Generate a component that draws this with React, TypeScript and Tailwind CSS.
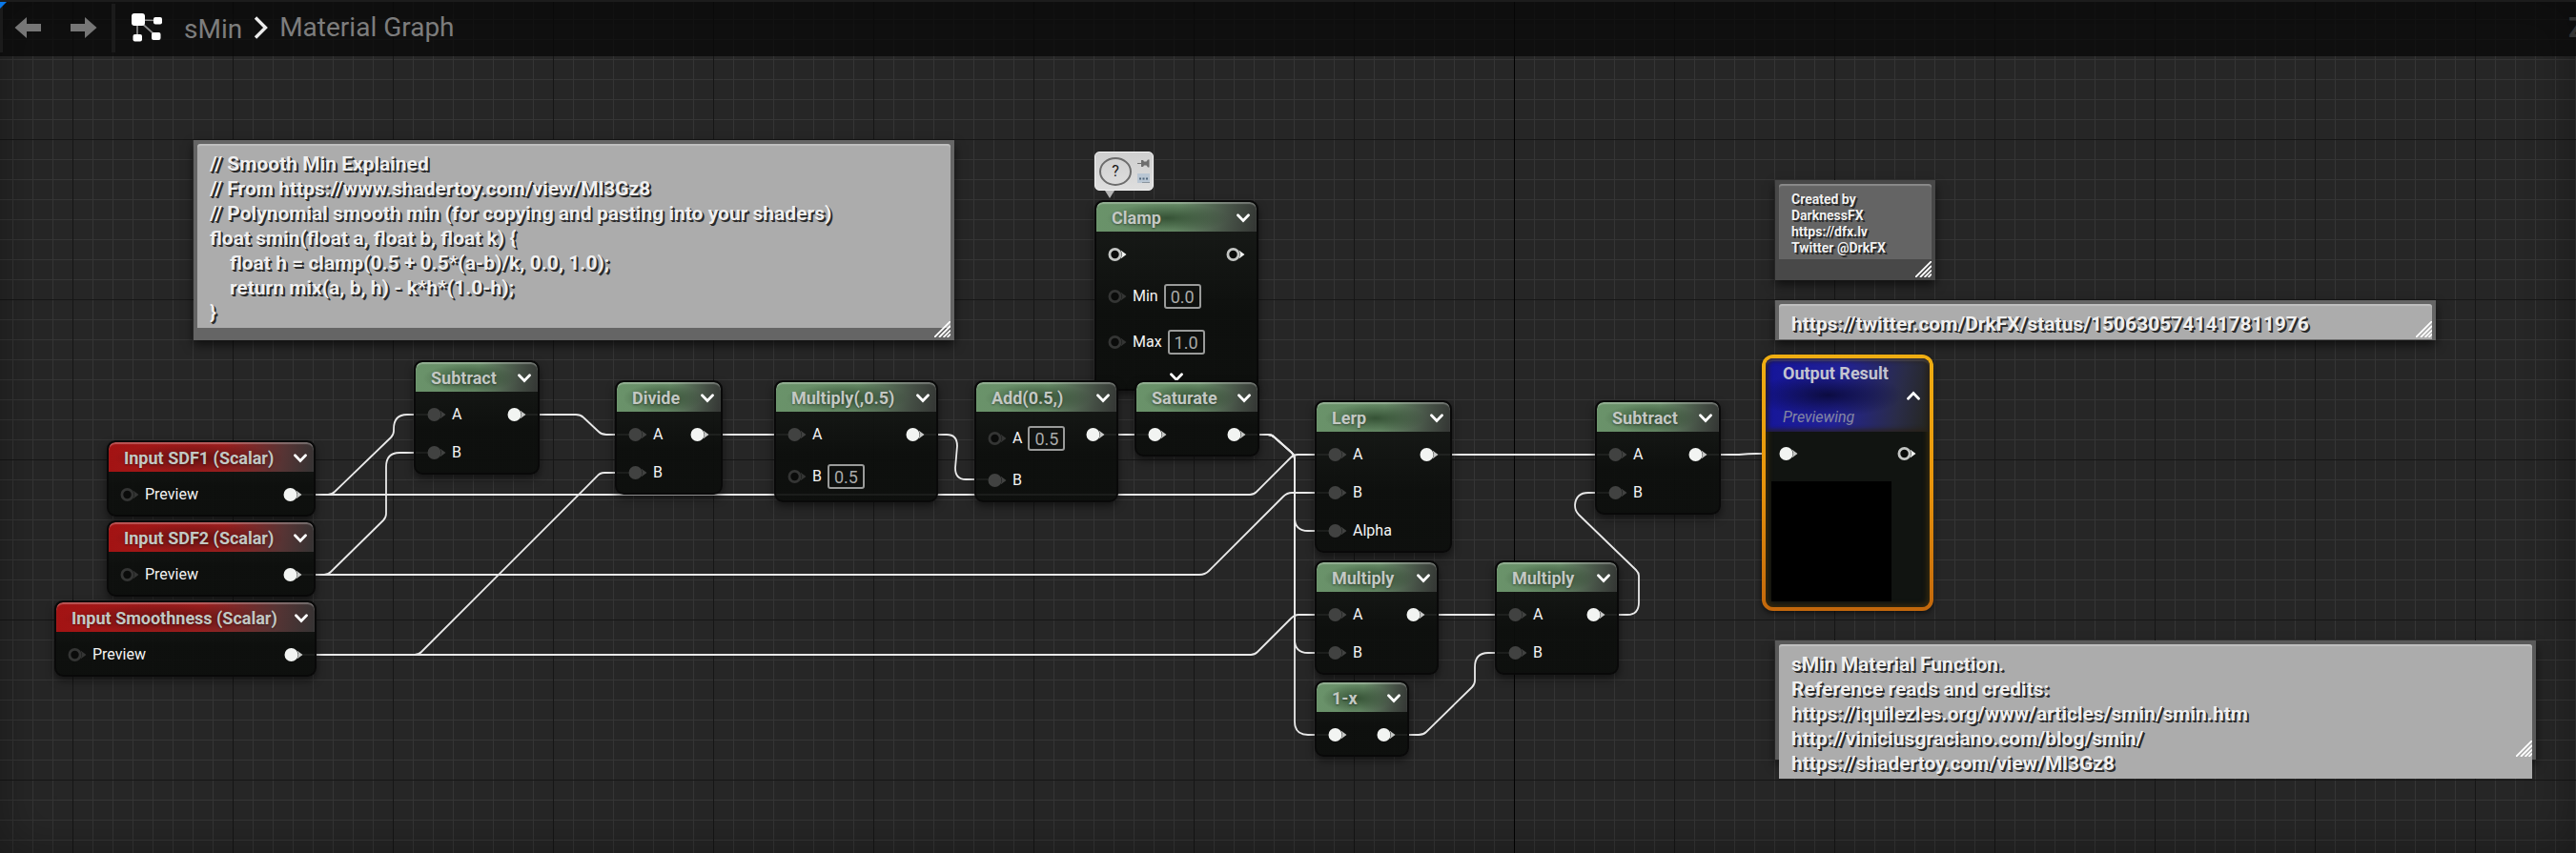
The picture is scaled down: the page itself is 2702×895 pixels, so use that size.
import type { ReactNode } from "react";

type PinKind = "linked" | "linkedDim" | "open" | "openDim";
type Tone = "green" | "red";

interface InputPin {
  kind: PinKind;
  label?: string;
  value?: string;
}

interface GraphNode {
  id: string;
  title: string;
  tone: Tone;
  place: string;
  inputs: InputPin[];
  output: PinKind;
  expandable?: boolean;
}

const A: InputPin = { kind: "linkedDim", label: "A" };
const B: InputPin = { kind: "linkedDim", label: "B" };
const PREVIEW: InputPin = { kind: "openDim", label: "Preview" };

const NODES: GraphNode[] = [
  {
    id: "clamp",
    title: "Clamp",
    tone: "green",
    place: "left-[1148px] top-[210px] w-[172px]",
    inputs: [
      { kind: "open" },
      { kind: "openDim", label: "Min", value: "0.0" },
      { kind: "openDim", label: "Max", value: "1.0" },
    ],
    output: "open",
    expandable: true,
  },
  { id: "sdf1", title: "Input SDF1 (Scalar)", tone: "red", place: "left-[112px] top-[462px] w-[219px]", inputs: [PREVIEW], output: "linked" },
  { id: "sdf2", title: "Input SDF2 (Scalar)", tone: "red", place: "left-[112px] top-[546px] w-[219px]", inputs: [PREVIEW], output: "linked" },
  { id: "smooth", title: "Input Smoothness (Scalar)", tone: "red", place: "left-[57px] top-[630px] w-[275px]", inputs: [PREVIEW], output: "linked" },
  { id: "sub1", title: "Subtract", tone: "green", place: "left-[434px] top-[378px] w-[132px]", inputs: [A, B], output: "linked" },
  { id: "div", title: "Divide", tone: "green", place: "left-[645px] top-[399px] w-[113px]", inputs: [A, B], output: "linked" },
  {
    id: "mulHalf",
    title: "Multiply(,0.5)",
    tone: "green",
    place: "left-[812px] top-[399px] w-[172px]",
    inputs: [A, { kind: "openDim", label: "B", value: "0.5" }],
    output: "linked",
  },
  {
    id: "addHalf",
    title: "Add(0.5,)",
    tone: "green",
    place: "left-[1022px] top-[399px] w-[151px]",
    inputs: [{ kind: "openDim", label: "A", value: "0.5" }, B],
    output: "linked",
  },
  { id: "sat", title: "Saturate", tone: "green", place: "left-[1190px] top-[399px] w-[131px]", inputs: [{ kind: "linked" }], output: "linked" },
  {
    id: "lerp",
    title: "Lerp",
    tone: "green",
    place: "left-[1379px] top-[420px] w-[144px]",
    inputs: [A, B, { kind: "linkedDim", label: "Alpha" }],
    output: "linked",
  },
  { id: "mul1", title: "Multiply", tone: "green", place: "left-[1379px] top-[588px] w-[130px]", inputs: [A, B], output: "linked" },
  { id: "oneMinus", title: "1-x", tone: "green", place: "left-[1379px] top-[714px] w-[99px]", inputs: [{ kind: "linked" }], output: "linked" },
  { id: "mul2", title: "Multiply", tone: "green", place: "left-[1568px] top-[588px] w-[130px]", inputs: [A, B], output: "linked" },
  { id: "sub2", title: "Subtract", tone: "green", place: "left-[1673px] top-[420px] w-[132px]", inputs: [A, B], output: "linked" },
];

const WIRES: string[] = [
  "M310 519 H1311 Q1315 519 1318 516 L1354 480 Q1357 477 1361 477 H1400",
  "M310 519 H344 Q348 519 351 516 L410 459 Q413 456 413 452 V450 Q413 435 427 435 H456",
  "M310 603 H1258 Q1264 603 1268 599 L1346 521 Q1350 517 1355 517 H1400",
  "M310 603 H340 Q344 603 347 600 L402 546 Q405 543 405 539 V490 Q405 475 419 475 H456",
  "M310 687 H1312 Q1316 687 1319 684 L1354 649 Q1358 645 1362 645 H1400",
  "M310 687 H435 Q439 687 442 684 L626 500 Q629 496 634 496 H666",
  "M546 435 H604 Q609 435 612 438 L628 453 Q631 456 636 456 H666",
  "M738 456 H834",
  "M965 456 H993 Q1004 456 1004 468 L1002 491 Q1002 503 1013 503 H1044",
  "M1154 456 H1212",
  "M1302 456 H1330 Q1334 456 1337 459 L1355 475 Q1358 478 1358 482 V543 Q1358 557 1372 557 H1400",
  "M1302 456 H1330 Q1334 456 1337 459 L1355 475 Q1358 478 1358 482 V671 Q1358 685 1372 685 H1400",
  "M1302 456 H1330 Q1334 456 1337 459 L1355 475 Q1358 478 1358 482 V757 Q1358 771 1372 771 H1400",
  "M1502 477 H1694",
  "M1489 645 H1590",
  "M1459 771 H1488 Q1493 771 1496 768 L1544 721 Q1547 718 1547 714 V700 Q1547 685 1561 685 H1590",
  "M1678 645 H1707 Q1719 645 1719 632 V604 Q1719 601 1716 598 L1656 540 Q1652 536 1652 530 Q1653 517 1666 517 H1694",
  "M1785 477 H1824 Q1834 476 1842 476 H1874",
];

const TONE_CLASS: Record<Tone, string> = {
  green:
    "bg-[radial-gradient(ellipse_38%_50%_at_44%_54%,rgba(36,62,36,0.75),rgba(36,62,36,0)_100%),linear-gradient(100deg,#6a936a_0%,#688c68_50%,#444e44_84%,#343634_100%)]",
  red: "bg-[radial-gradient(ellipse_42%_50%_at_44%_54%,rgba(80,14,14,0.75),rgba(80,14,14,0)_100%),linear-gradient(100deg,#a31313_0%,#9e1f1f_55%,#573434_84%,#343333_100%)]",
};

function Pin({ kind }: { kind: PinKind }) {
  const dim = kind === "linkedDim" || kind === "openDim";
  const filled = kind === "linked" || kind === "linkedDim";
  const color = dim ? (filled ? "#414241" : "#343534") : "#f2f4f2";
  return (
    <svg width="20" height="16" viewBox="0 0 20 16" className="shrink-0" aria-hidden="true">
      <path d="M13.5 3.5 L19.5 8 L13.5 12.5 Q16 8 13.5 3.5 Z" fill={color} opacity={filled && !dim ? 0.8 : 1} />
      {filled ? (
        <circle cx="7.5" cy="8" r="7" fill={color} />
      ) : (
        <circle cx="7.5" cy="8" r="5.6" fill="#0a0b0a" stroke={dim ? color : "#c4c6c4"} strokeWidth="2.8" />
      )}
    </svg>
  );
}

function Chevron({ up = false }: { up?: boolean }) {
  return (
    <svg width="14" height="10" viewBox="0 0 14 10" fill="none" stroke="#fff" strokeWidth="2.8" aria-hidden="true">
      <path d={up ? "M1.5 8.2 L7 2.6 L12.5 8.2" : "M1.5 1.8 L7 7.4 L12.5 1.8"} strokeLinecap="round" />
    </svg>
  );
}

function PinRow({ pin, name }: { pin: InputPin; name: string }) {
  return (
    <label className={`flex items-center gap-1.5 text-[16px] leading-5 text-[#f4f4f4] ${pin.value ? "h-12" : "h-10"}`}>
      <Pin kind={pin.kind} />
      {pin.label && <span>{pin.label}</span>}
      {pin.value && (
        <input
          type="text"
          defaultValue={pin.value}
          aria-label={`${name} ${pin.label}`}
          className="h-[26px] w-[39px] rounded-[3px] border-2 border-[#9a9b9a] bg-transparent p-0 text-center text-[18px] leading-5 text-[#a9aaa9] outline-none"
        />
      )}
    </label>
  );
}

function NodeCard({ node }: { node: GraphNode }) {
  return (
    <article
      className={`absolute overflow-hidden rounded-[9px] border-2 border-[#090909] bg-[linear-gradient(to_bottom,rgba(24,27,24,0.93),rgba(12,14,12,0.93)_60%)] shadow-[0_4px_8px_rgba(0,0,0,0.5)] ${node.place}`}
    >
      <header
        className={`flex h-[31px] items-center justify-between rounded-t-[7px] pt-0.5 pr-[7px] pl-4 shadow-[inset_0_2px_1px_rgba(255,255,255,0.28)] ${TONE_CLASS[node.tone]}`}
      >
        <h2 className="text-[18px] leading-5 font-bold whitespace-nowrap text-[#c3c8c3] [text-shadow:0_1px_2px_rgba(0,0,0,0.4)]">{node.title}</h2>
        <button type="button" aria-label={`Toggle ${node.title} preview`}>
          <Chevron />
        </button>
      </header>
      <div className="flex justify-between pt-1 pr-3 pb-px pl-3">
        <div>
          {node.inputs.map((pin, i) => (
            <PinRow key={i} pin={pin} name={node.title} />
          ))}
        </div>
        <div className="flex h-10 items-center">
          <Pin kind={node.output} />
        </div>
      </div>
      {node.expandable && (
        <button type="button" aria-label="Show advanced pins" className="flex h-6 w-full items-center justify-center">
          <Chevron />
        </button>
      )}
    </article>
  );
}

function OutputNode() {
  return (
    <article className="absolute top-[372px] left-[1848px] w-[180px] rounded-[12px] bg-[linear-gradient(to_bottom,#efae12,#e8950c_50%,#c2670c)] p-1 shadow-[0_2px_6px_rgba(0,0,0,0.6)]">
      <div className="rounded-[8px] bg-[#111411] shadow-[inset_0_0_5px_3px_rgba(90,62,10,0.45)]">
        <header className="flex h-[77px] items-center justify-between rounded-t-[8px] bg-[radial-gradient(ellipse_46%_30%_at_38%_50%,rgba(8,8,50,0.85),rgba(8,8,50,0)_100%),linear-gradient(100deg,#14149a_0%,#222296_45%,#2a2c48_80%,#25261e_100%)] pr-2.5 pl-[18px] shadow-[inset_0_0_4px_3px_rgba(40,32,20,0.7),inset_0_3px_1px_rgba(255,255,255,0.2)]">
          <div className="flex flex-col gap-[26px] whitespace-nowrap">
            <h2 className="text-[18px] leading-5 font-bold text-[#c4c4d0]">Output Result</h2>
            <p className="text-[16px] leading-5 text-[#8587a0] italic">Previewing</p>
          </div>
          <button type="button" aria-label="Collapse preview">
            <Chevron up />
          </button>
        </header>
        <div className="flex h-[46px] items-center justify-between pr-[14px] pl-[14px]">
          <Pin kind="linked" />
          <Pin kind="open" />
        </div>
        <div className="px-1.5 pt-1.5 pb-1.5">
          <div className="size-[126px] bg-black" />
        </div>
      </div>
    </article>
  );
}

interface NoteProps {
  place: string;
  frame: string;
  body: string;
  text: string;
  children: ReactNode;
}

function Note({ place, frame, body, text, children }: NoteProps) {
  return (
    <aside className={`absolute px-1 pt-1 shadow-[0_5px_10px_rgba(0,0,0,0.6)] ${place} ${frame}`}>
      <div
        className={`rounded-t-[3px] pl-[13px] text-[#f0f0f0] shadow-[inset_0_2px_1px_rgba(255,255,255,0.25)] ${body}`}
      >
        <p className={`font-bold whitespace-pre [text-shadow:1px_1px_0_#2a2a2a,2px_2px_0_#2a2a2a] ${text}`}>{children}</p>
      </div>
      <svg
        className="absolute right-1 bottom-[3px]"
        width="17"
        height="17"
        viewBox="0 0 17 17"
        stroke="#fff"
        strokeWidth="1.8"
        aria-hidden="true"
      >
        <path d="M0 17 L17 0 M5 17 L17 5 M9.6 17 L17 9.6 M13.6 17 L17 13.6" />
      </svg>
    </aside>
  );
}

function HelpBubble() {
  return (
    <div className="absolute top-[159px] left-[1148px]">
      <div className="flex h-[41px] w-[62px] items-center gap-1.5 rounded-[5px] border border-[#f2f2f2] bg-[linear-gradient(to_bottom,#cfcfcf,#dedede)] pl-1">
        <button
          type="button"
          aria-label="Edit comment"
          className="flex h-[30px] w-[34px] items-center justify-center rounded-[50%] border-2 border-[#6c6c6c] text-[16px] leading-5 text-[#151515]"
        >
          ?
        </button>
        <svg width="13" height="26" viewBox="0 0 13 26" aria-hidden="true">
          <path d="M0 4 H4 V1 H6 L7 2.5 H9.5 L11 0.5 H12.5 V8.5 H11 L9.5 6.5 H7 L6 8 H4 V5 H0 Z" fill="#6e6e6e" />
          <rect x="0" y="15" width="13" height="10" fill="#b9c6d3" />
          <path d="M2 20.5 H4 M5.5 20.5 H7.5 M9 20.5 H11" stroke="#51677d" strokeWidth="2.2" />
          <path d="M5 24.5 H13" stroke="#8b959e" />
        </svg>
      </div>
      <svg className="ml-[11px]" width="10" height="8" viewBox="0 0 10 8" aria-hidden="true">
        <path d="M0 0 H10 L5 8 Z" fill="#b5b5b5" />
      </svg>
    </div>
  );
}

function Toolbar() {
  return (
    <header className="relative z-10 col-start-1 row-start-1 flex h-[59px] items-center overflow-hidden border-t-2 border-[#1c1c1c] bg-[rgba(8,8,8,0.75)] pb-[3px]">
      <div className="h-[51px] w-[3px] bg-[#1b1b1b]" />
      <svg className="absolute top-0 left-0" width="7" height="7" viewBox="0 0 7 7" aria-hidden="true">
        <path d="M0 0 H7 L0 7 Z" fill="#0a78e8" />
      </svg>
      <button type="button" aria-label="Back" className="ml-3">
        <svg width="28" height="22" viewBox="0 0 28 22" aria-hidden="true">
          <path d="M0.5 11 L13 0 V7 H28 V15 H13 V22 Z" fill="#767676" />
        </svg>
      </button>
      <button type="button" aria-label="Forward" className="ml-[31px]">
        <svg width="28" height="22" viewBox="0 0 28 22" aria-hidden="true">
          <path d="M27.5 11 L15 0 V7 H0 V15 H15 V22 Z" fill="#767676" />
        </svg>
      </button>
      <div className="ml-[15px] h-[51px] w-[4px] bg-[#1b1b1b]" />
      <svg className="ml-[17px]" width="32" height="30" viewBox="0 0 32 30" aria-hidden="true">
        <path d="M7 7 L27 7.5 M6 7 V25 M8 8 L26 24" stroke="#8d8d8d" strokeWidth="1.7" />
        <rect x="0" y="0" width="14" height="13" rx="3" fill="#fff" />
        <rect x="23" y="4" width="9" height="7.5" rx="2" fill="#fff" />
        <rect x="1.5" y="22" width="9.5" height="7.5" rx="2" fill="#fff" />
        <rect x="21" y="20" width="9.5" height="8" rx="2" fill="#fff" />
      </svg>
      <nav aria-label="Graph path" className="ml-[23px] flex items-center gap-3 text-[28px] leading-8 whitespace-nowrap text-[#7d7d7d]">
        <a href="#smin" className="pt-[3px]">
          sMin
        </a>
        <svg width="15" height="24" viewBox="0 0 15 24" fill="none" stroke="#ececec" strokeWidth="3.4" aria-hidden="true">
          <path d="M2 1.5 L12.5 12 L2 22.5" />
        </svg>
        <a href="#graph">Material Graph</a>
      </nav>
      <span className="ml-auto w-2 text-[30px] leading-8 font-bold text-[#333333]">Z</span>
    </header>
  );
}

const CODE_NOTE = `// Smooth Min Explained
// From https://www.shadertoy.com/view/Ml3Gz8
// Polynomial smooth min (for copying and pasting into your shaders)
float smin(float a, float b, float k) {
    float h = clamp(0.5 + 0.5*(a-b)/k, 0.0, 1.0);
    return mix(a, b, h) - k*h*(1.0-h);
}`;

const AUTHOR_NOTE = `Created by
DarknessFX
https://dfx.lv
Twitter @DrkFX`;

const CREDITS_NOTE = `sMin Material Function.
Reference reads and credits:
https://iquilezles.org/www/articles/smin/smin.htm
http://viniciusgraciano.com/blog/smin/
https://shadertoy.com/view/Ml3Gz8`;

export default function App() {
  return (
    <div className="grid min-h-screen grid-cols-1 grid-rows-[auto_1fr] overflow-hidden bg-[#262626] bg-[linear-gradient(to_right,#161616_1px,transparent_1px),linear-gradient(to_bottom,#161616_1px,transparent_1px),linear-gradient(to_right,#353535_1px,transparent_1px),linear-gradient(to_bottom,#353535_1px,transparent_1px)] [background-position:76px_0,0_146px,13px_0,0_20px] [background-size:168px_168px,168px_168px,21px_21px,21px_21px] font-['Roboto',sans-serif]">
      <Toolbar />
      <main className="relative col-start-1 row-span-2 row-start-1 shadow-[inset_0_0_50px_rgba(0,0,0,0.35)]">
        <div className="absolute inset-y-0 left-[1588px] w-px bg-black" />
        <svg className="absolute top-0 left-0 h-full w-full" fill="none" stroke="#e9e9e9" strokeWidth="1.8" aria-hidden="true">
          {WIRES.map((d, i) => (
            <path key={i} d={d} />
          ))}
        </svg>

        <Note
          place="left-[203px] top-[147px] w-[798px]"
          frame="bg-[#656565] pb-[13px]"
          body="bg-[#acacac] pt-[8px] pb-[3px]"
          text="text-[21px] leading-[26px]"
        >
          {CODE_NOTE}
        </Note>
        <Note
          place="left-[1862px] top-[189px] w-[168px]"
          frame="bg-[#484848] pb-[22px]"
          body="bg-[#646464] pt-[8px] pb-[3px]"
          text="text-[14px] leading-[17px]"
        >
          {AUTHOR_NOTE}
        </Note>
        <Note
          place="left-[1862px] top-[315px] w-[693px]"
          frame="bg-[#656565] pb-px"
          body="bg-[#acacac] pt-[8px] pb-[3px]"
          text="text-[21px] leading-[26px]"
        >
          https://twitter.com/DrkFX/status/1506305741417811976
        </Note>
        <Note
          place="left-[1862px] top-[672px] h-[125px] w-[798px]"
          frame="bg-[#5a5a5a]"
          body="bg-[#acacac] pt-[8px] pb-[3px]"
          text="text-[21px] leading-[26px]"
        >
          {CREDITS_NOTE}
        </Note>

        {NODES.map((node) => (
          <NodeCard key={node.id} node={node} />
        ))}
        <OutputNode />
        <HelpBubble />
      </main>
    </div>
  );
}
